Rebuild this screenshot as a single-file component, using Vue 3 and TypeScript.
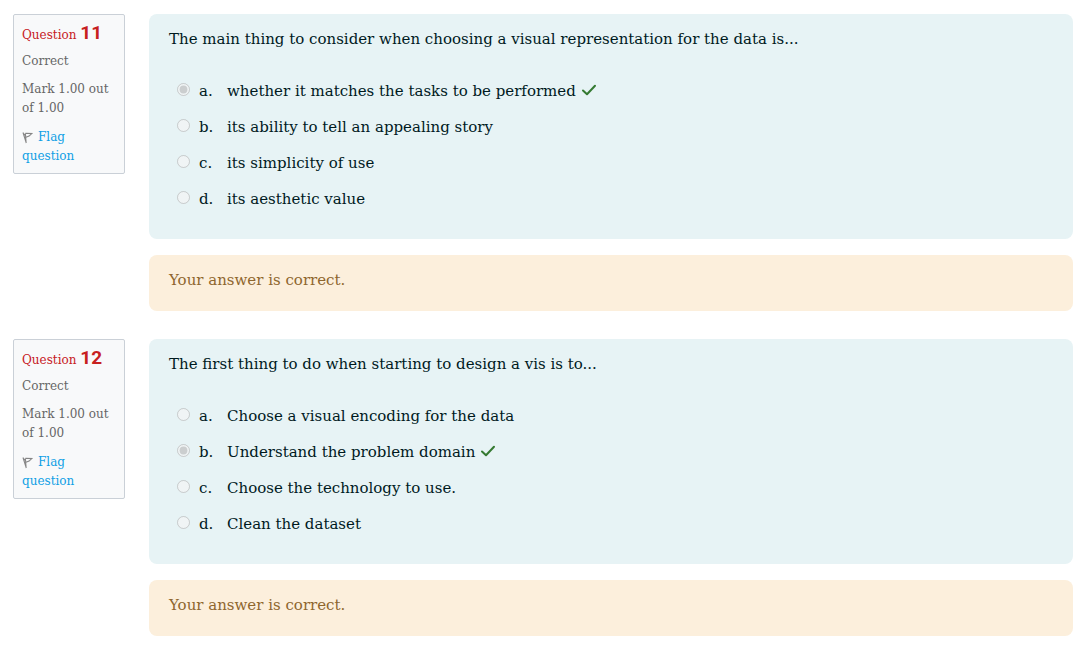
<script setup lang="ts">
interface Question {
  number: number
  prompt: string
  answers: string[]
  selected: number
}

const questions: Question[] = [
  {
    number: 11,
    prompt: 'The main thing to consider when choosing a visual representation for the data is...',
    answers: [
      'whether it matches the tasks to be performed',
      'its ability to tell an appealing story',
      'its simplicity of use',
      'its aesthetic value',
    ],
    selected: 0,
  },
  {
    number: 12,
    prompt: 'The first thing to do when starting to design a vis is to...',
    answers: [
      'Choose a visual encoding for the data',
      'Understand the problem domain',
      'Choose the technology to use.',
      'Clean the dataset',
    ],
    selected: 1,
  },
]

const letters = ['a.', 'b.', 'c.', 'd.']
</script>

<template>
  <main class="quiz">
    <section v-for="q in questions" :key="q.number" class="question">
      <aside class="info">
        <h3 class="title">Question <span class="number">{{ q.number }}</span></h3>
        <div class="state">Correct</div>
        <div class="grade">Mark 1.00 out of 1.00</div>
        <a class="flag" href="#">
          <svg class="flag-icon" viewBox="0 0 12 13" aria-hidden="true">
            <path d="M1 1.5 4.3 12M1.3 2.3 3 4.2M3.4 2.5 4.1 11.5M3.4 2.3 9.8 2.6 7.1 5.1 3.9 6.2" fill="none" stroke="#858585" stroke-width="1.1" />
          </svg>Flag question</a>
      </aside>
      <div class="content">
        <fieldset class="formulation">
          <legend class="prompt">{{ q.prompt }}</legend>
          <div v-for="(answer, i) in q.answers" :key="i" class="answer">
            <input
              :id="`q${q.number}-${i}`"
              type="radio"
              :name="`q${q.number}`"
              :checked="i === q.selected"
              disabled
            />
            <label :for="`q${q.number}-${i}`" class="answer-label">
              <span class="letter">{{ letters[i] }}</span>
              <span>{{ answer }}</span>
            </label>
            <svg v-if="i === q.selected" class="check" viewBox="0 0 16 16" role="img" aria-label="Correct">
              <path d="M2 8.5 6 12.3 14 3.7" fill="none" stroke="#357a32" stroke-width="2" stroke-linecap="round" stroke-linejoin="round" />
            </svg>
          </div>
        </fieldset>
        <div class="feedback">Your answer is correct.</div>
      </div>
    </section>
  </main>
</template>

<style>
body {
  margin: 0;
  background: #fff;
}
</style>

<style scoped>
.quiz {
  box-sizing: border-box;
  padding: 14px 19px 10px 13px;
  display: flex;
  flex-direction: column;
  gap: 28px;
  font-family: "DejaVu Serif", serif;
  font-size: 15px;
  line-height: 24px;
  color: #001a1e;
}
.question {
  display: flex;
  align-items: flex-start;
  gap: 24px;
}
.info {
  box-sizing: border-box;
  width: 112px;
  flex: none;
  padding: 8px 8px 7px;
  border: 1px solid #cad0d7;
  border-radius: 2px;
  background: #f8f9fa;
  font-size: 12px;
  line-height: 19px;
  color: #666;
}
.title {
  margin: 0 0 7px;
  font-size: 12px;
  font-weight: 400;
  line-height: 20px;
  color: #c7201e;
  white-space: nowrap;
}
.number {
  font-family: Roboto, sans-serif;
  font-size: 19px;
  font-weight: 700;
}
.state {
  margin-bottom: 9px;
}
.grade {
  margin-bottom: 10px;
}
.flag {
  display: block;
  color: #0f9fe5;
  text-decoration: none;
}
.flag-icon {
  width: 12px;
  height: 13px;
  margin-right: 4px;
  vertical-align: -3px;
}
.content {
  flex: 1;
  min-width: 0;
}
.formulation {
  box-sizing: border-box;
  min-width: 0;
  margin: 0 0 16px;
  padding: 13px 20px 22px;
  border: 0;
  border-radius: 8px;
  background: #e7f3f5;
}
.prompt {
  float: left;
  width: 100%;
  padding: 0;
  margin-bottom: 22px;
}
.answer {
  clear: both;
  display: flex;
  align-items: center;
  height: 36px;
  padding-left: 8px;
}
.answer input {
  width: 13px;
  height: 13px;
  margin: 0 9px 3px 0;
}
.answer-label {
  display: flex;
}
.letter {
  width: 28px;
}
.check {
  width: 16px;
  height: 16px;
  margin: 0 0 2px 5px;
}
.feedback {
  padding: 13px 20px 19px;
  border-radius: 8px;
  background: #fcefdc;
  color: #8e662e;
}
</style>
